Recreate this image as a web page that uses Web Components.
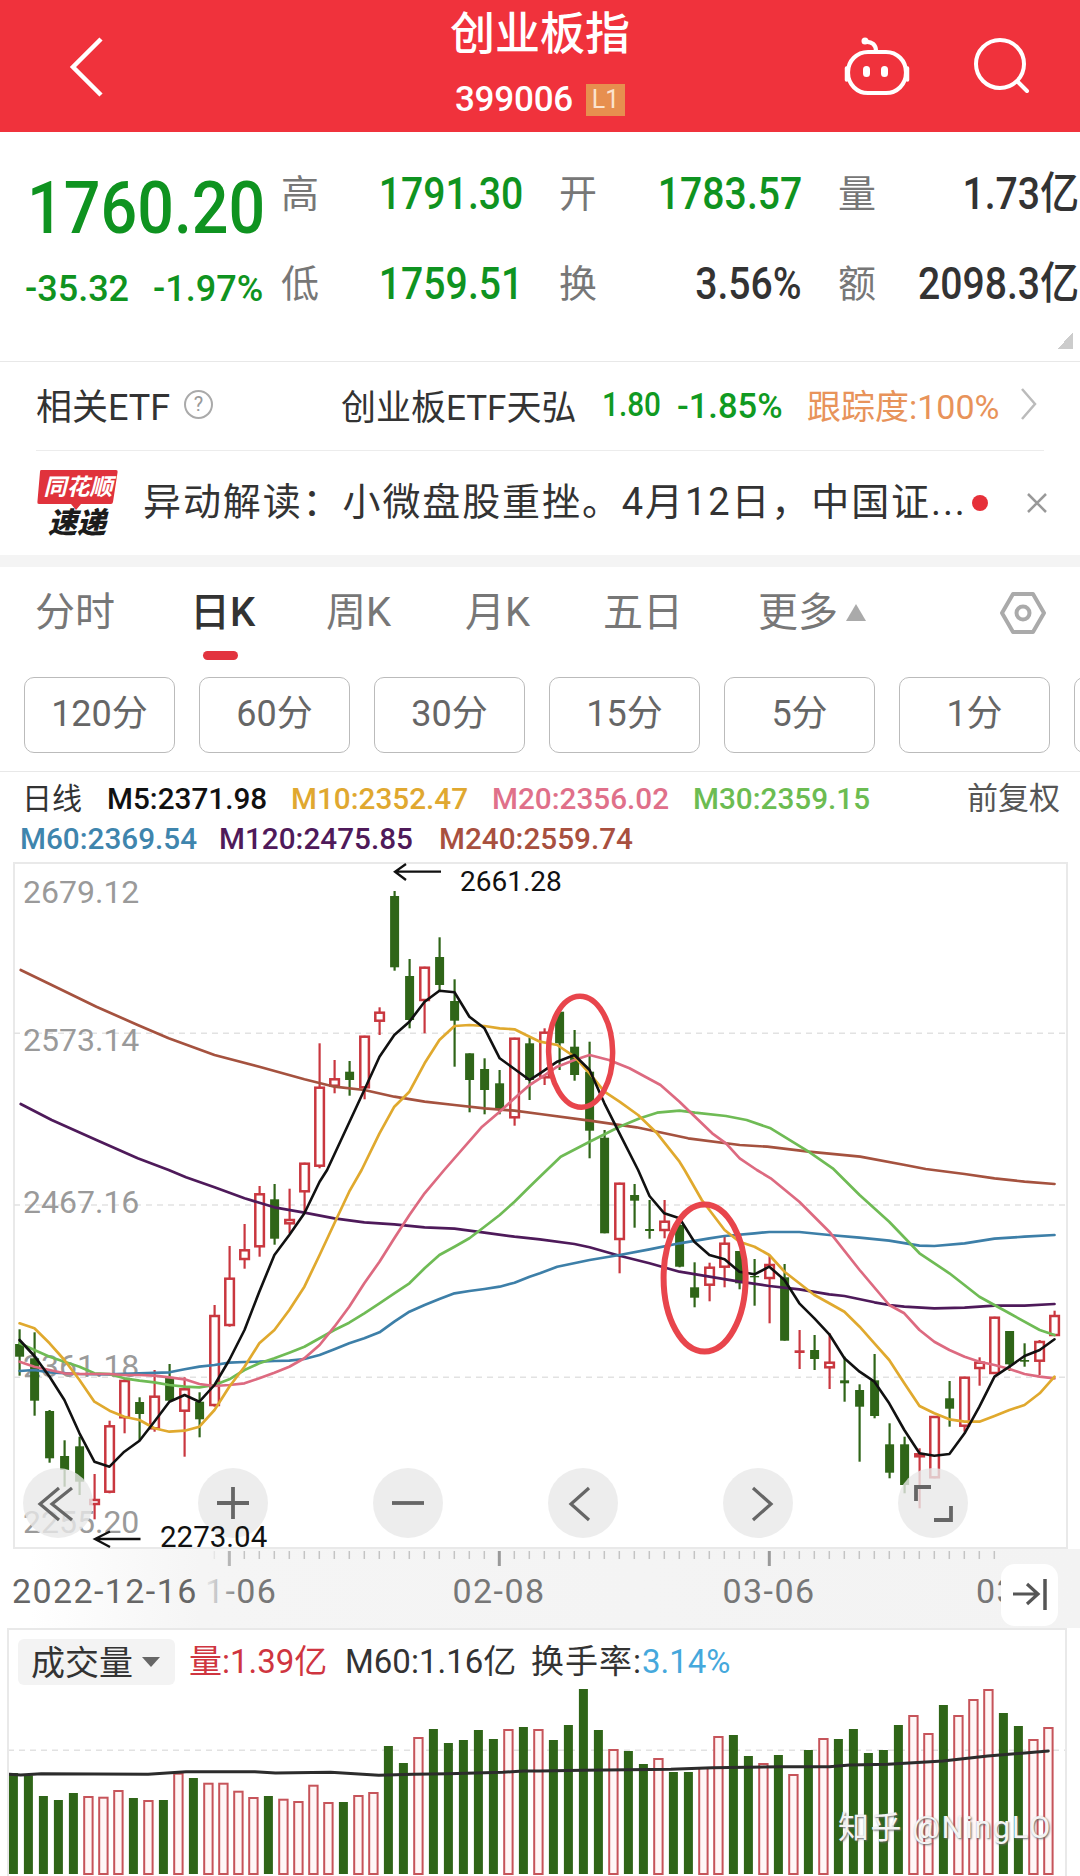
<!DOCTYPE html>
<html lang="zh">
<head>
<meta charset="utf-8">
<title>创业板指</title>
<style>
html,body{margin:0;padding:0;background:#fff}
body{width:1080px;height:1876px;overflow:hidden;font-family:Roboto,"Noto Sans CJK SC",sans-serif;color:#333}
</style>
</head>
<body>
<stock-app>
  <top-bar title="创业板指" code="399006"></top-bar>
  <quote-panel></quote-panel>
  <etf-row></etf-row>
  <news-row></news-row>
  <period-tabs></period-tabs>
  <period-chips></period-chips>
  <ma-legend></ma-legend>
  <kline-chart></kline-chart>
  <time-axis></time-axis>
  <volume-panel></volume-panel>
</stock-app>
<script>
const def=(name,render)=>customElements.define(name,class extends HTMLElement{
  connectedCallback(){ if(this.shadowRoot) return; this.attachShadow({mode:'open'}).innerHTML=render(this); }
});

def('stock-app',()=>`<style>:host{display:block;width:1080px;height:1876px;overflow:hidden}</style><slot></slot>`);

def('top-bar',el=>`<style>
:host{display:grid;grid-template-columns:1fr auto 1fr;align-items:center;height:132px;background:#f0323c;color:#fff}
.l{padding-left:70px;display:flex}
.c{display:flex;flex-direction:column;align-items:center;align-self:start}
.t{font-size:45px;line-height:70px;font-weight:500;height:80px}
.s{display:flex;align-items:center;height:40px;gap:13px}
.code{font-size:35px;line-height:40px;letter-spacing:-.2px;font-weight:500}
.b{width:39px;height:32px;background:#e78f4f;color:#fbe3cf;font-size:25px;line-height:32px;text-align:center}
.r{display:flex;justify-content:flex-end;padding-right:52px;gap:65px;align-items:center}
svg{display:block;overflow:visible}
</style>
<div class="l"><svg width="34" height="60" fill="none" stroke="#fff" stroke-width="4.5"><path d="M31 3 3 31l28 28"/></svg></div>
<div class="c"><div class="t">${el.getAttribute('title')}</div><div class="s"><span class="code">${el.getAttribute('code')}</span><span class="b">L1</span></div></div>
<div class="r">
<svg width="64" height="58" fill="none" stroke="#fff" stroke-width="4.2" stroke-linecap="round"><rect x="3" y="15" width="58" height="41" rx="20"/><path d="M1.5 31v12M62.5 31v12" stroke-width="3.500"/><circle cx="20" cy="4" r="3.5" fill="#fff" stroke="none"/><path d="M20 5c7-1 11 3 11 9"/><rect x="19" y="30" width="5" height="9" rx="2.5" fill="#fff" stroke-width="2"/><rect x="37" y="30" width="5" height="9" rx="2.5" fill="#fff" stroke-width="2"/></svg>
<svg width="54" height="54" fill="none" stroke="#fff" stroke-width="4" stroke-linecap="round"><circle cx="26" cy="25" r="24"/><path d="M44 43l9 9"/></svg>
</div>`);

def('quote-panel',()=>{
const G='#0f9320',D='#333',L='#777';
const lab=(c,r,t)=>`<span class="lab" style="grid-column:${c};grid-row:${r}">${t}</span>`;
const val=(c,r,t,col)=>`<span class="val" style="grid-column:${c};grid-row:${r};color:${col}">${t}</span>`;
return `<style>
:host{display:grid;box-sizing:border-box;height:230px;padding:17px 0 0 26px;grid-template-columns:255px 40px 202px 36px 40px 203px 36px 40px 201px;grid-template-rows:90px 90px 32px;border-bottom:1.5px solid #e8e8e8;align-items:center}
.lab{font-size:38px;line-height:50px;color:${L}}
.val{font-size:44px;line-height:50px;justify-self:end;display:inline-block;transform:scaleX(.89);transform-origin:right center;white-space:nowrap;font-weight:500}
.big{grid-column:1;grid-row:1;align-self:end;font-size:73px;line-height:62px;font-weight:500;color:${G};display:inline-block;transform:scaleX(.885);transform-origin:left center;margin-left:1px;white-space:nowrap}
.sub{grid-column:1;grid-row:2;padding-top:10px;margin-left:-1px;font-size:36px;line-height:44px;color:${G};display:flex;gap:24px;white-space:nowrap;font-weight:500}
.tri{grid-column:1/-1;grid-row:3;justify-self:end;margin-right:6px;align-self:start;margin-top:4px;width:16px;height:16px;background:linear-gradient(135deg,transparent 50%,#ccc 50%)}
</style>
<span class="big">1760.20</span>
<span class="sub"><span>-35.32</span><span>-1.97%</span></span>
${lab(2,1,'高')}${val(3,1,'1791.30',G)}${lab(5,1,'开')}${val(6,1,'1783.57',G)}${lab(8,1,'量')}${val(9,1,'1.73亿',D)}
${lab(2,2,'低')}${val(3,2,'1759.51',G)}${lab(5,2,'换')}${val(6,2,'3.56%',D)}${lab(8,2,'额')}${val(9,2,'2098.3亿',D)}
<span class="tri"></span>`});

def('etf-row',()=>`<style>
:host{display:flex;align-items:center;box-sizing:border-box;height:89px;padding-bottom:4px;margin:0 36px 0 36px;border-bottom:1.5px solid #ececec;white-space:nowrap}
.a{font-size:36px;width:148px}
.q{width:29px;height:29px;box-sizing:border-box;border:2px solid #aaa;border-radius:50%;color:#999;font-size:20px;line-height:25px;text-align:center}
.b{font-size:35px;margin-left:128px;width:261px}
.n{font-size:33px;color:#109a22;display:inline-block;transform-origin:left center;font-weight:500}
.n1{width:75px;transform:scaleX(.9)}.n2{width:130px;font-size:34.500px;padding-top:3px}
.o{font-size:34px;color:#e8935a;width:214px}
svg{display:block}
</style>
<span class="a">相关ETF</span><span class="q">?</span>
<span class="b">创业板ETF天弘</span>
<span class="n n1">1.80</span><span class="n n2">-1.85%</span>
<span class="o">跟踪度:100%</span>
<svg width="16" height="32" fill="none" stroke="#bbb" stroke-width="2.5"><path d="M1 1l13 15L1 31"/></svg>`);

def('news-row',()=>`<style>
:host{display:flex;align-items:center;box-sizing:border-box;height:104px;padding-left:37px;white-space:nowrap}
svg{display:block;flex:none}
.logo{margin-top:8px}
.t{font-size:38px;letter-spacing:1.9px;margin-left:24px;width:829px;color:#333;overflow:hidden;padding-bottom:10px}
.d{width:16px;height:16px;border-radius:50%;background:#e63039;flex:none}
.x{margin-left:38px}
</style>
<svg class="logo" width="82" height="76" viewBox="0 0 82 76"><path d="M4 1h75q2 0 1.600 2L76 33q-.4 2-2 2H44l-5 6-5-6H2q-2 0-1.600-2L3 3q0-2 1-2z" fill="#e0323c"/><text x="41" y="26" font-size="23" font-weight="700" font-style="italic" fill="#fff" text-anchor="middle" font-family="Noto Sans CJK SC,sans-serif">同花顺</text><text x="40" y="64" font-size="29" font-weight="900" font-style="italic" fill="#1c1c1c" text-anchor="middle" font-family="Noto Sans CJK SC,sans-serif">速递</text></svg>
<span class="t">异动解读：小微盘股重挫。4月12日，中国证...</span>
<span class="d"></span>
<svg class="x" width="22" height="22" fill="none" stroke="#999" stroke-width="2.500"><path d="M2 2l18 18M20 2 2 20"/></svg>`);

def('period-tabs',()=>`<style>
:host{display:block;box-sizing:border-box;height:122px;border-top:12px solid #f4f4f4;position:relative}
.row{display:grid;grid-template-columns:155px 136px 139px 138px 155px auto 1fr;height:84px;padding-left:35px;align-items:center;font-size:40px;color:#777}
.on{color:#333;font-weight:500}
.tri{display:inline-block;width:0;height:0;border:10px solid transparent;border-top:0;border-bottom:17px solid #aaa;margin-left:8px;vertical-align:5px}
.hex{justify-self:end;margin:8px 34px 0 0;display:block}
.bar{position:absolute;left:203px;top:84px;width:35px;height:9px;border-radius:5px;background:#e2343f}
</style>
<div class="row"><span>分时</span><span class="on">日K</span><span>周K</span><span>月K</span><span>五日</span><span>更多<i class="tri"></i></span>
<svg class="hex" width="46" height="44" fill="none" stroke="#aaa" stroke-width="4"><path d="M13 3h20l11 19-11 19H13L2 22z" stroke-linejoin="round"/><circle cx="23" cy="22" r="6.500"/></svg></div>
<div class="bar"></div>`);

def('period-chips',()=>`<style>
:host{display:flex;gap:24px;box-sizing:border-box;height:95px;padding:0 0 0 24px;overflow:hidden;border-bottom:1.5px solid #e8e8e8;align-items:flex-start}
span{flex:none;box-sizing:border-box;width:151px;height:76px;border:1.5px solid #bbb;border-radius:10px;text-align:center;font-size:36px;line-height:72px;color:#666}
</style>${['120分','60分','30分','15分','5分','1分',''].map(t=>`<span>${t}</span>`).join('')}`);

def('ma-legend',()=>{
const it=(t,c,w)=>`<span style="color:${c};width:${w}px;font-weight:500">${t}</span>`;
return `<style>
:host{display:block;box-sizing:border-box;height:90px;font-size:29.700px;white-space:nowrap}
.r{display:flex;height:39px;align-items:center;line-height:39px}
.r1{padding:7px 0 0 22px}
.r2{padding:0 0 0 20px;margin-top:1px}
.rt{margin-left:auto;margin-right:20px;font-size:31px;color:#555}
.z{color:#333;width:85px;font-size:30px}
</style>
<div class="r r1"><span class="z">日线</span>${it('M5:2371.98','#111',184)}${it('M10:2352.47','#e0a830',201)}${it('M20:2356.02','#e0708a',201)}${it('M30:2359.15','#6cbc52',176)}<span class="rt">前复权</span></div>
<div class="r r2">${it('M60:2369.54','#3f85ad',199)}${it('M120:2475.85','#4f1a5a',220)}${it('M240:2559.74','#a8503f',200)}</div>`});

/* ---------- chart data ---------- */
const Y=(b,v)=>+(b+v/3).toFixed(1);
const G5=[
['D',478,522,560,617],['D',487,565,692,737],['D',720,723,865,878],['D',811,858,900,950],['D',800,829,935,975],
['U',912,987,1005,1048],['U',752,766,968,970],['U',625,630,745,790],['D',682,696,732,810],['U',600,677,778,785],
['D',582,623,692,692],['U',622,655,725,860],['D',667,695,748,802],['U',405,435,708,710],['U',228,323,468,470],
['U',162,238,270,296],['U',48,70,232,260],['D',42,88,206,224],['U',56,147,163,190],['U',-22,-22,67,130]];
const G3=[
['U',820,950,1190,1195],['U',870,925,950,970],['D',873,905,930,977],['U',797,797,955,988],['U',712,725,755,795],
['D',363,378,592,602],['D',567,618,750,775],['U',590,590,693,790],['D',502,561,645,660],['D',628,693,752,890],
['D',850,850,930,1027],['D',865,897,960,1033],['D',900,940,1020,1033],['U',803,803,1045,1067],['D',803,820,930,990],
['U',775,785,925,945],['D',725,725,820,900],['D',780,830,915,932],['D',815,905,1082,1165],['D',1080,1103,1390,1390]];
const G6=[
['U',38,38,210,310],['D',42,75,92,173],['D',90,177,183,206],['U',90,152,183,205],['D',145,165,290,292],
['D',277,352,383,412],['U',278,290,347,394],['U',195,218,293,352],['D',243,243,340,358],['D',267,318,322,407],
['U',258,282,327,460],['D',282,322,512,512],['S',480,541,549,597],['D',495,540,567,600],['U',490,575,595,657],
['D',560,631,640,695],['D',643,660,710,875],['D',552,631,738,745],['D',760,823,908,925],['D',800,823,945,970],
['U',835,850,860,1015],['U',738,738,925,925],['D',633,685,716,770],['U',620,620,770,785],['U',562,575,597,647],
['U',440,440,612,612],['D',483,483,583,603],['D',520,570,575,590],['U',510,513,575,615],['U',422,435,498,498]];
const CANDLES=[...G5.map(c=>[c[0],...c.slice(1).map(v=>Y(1170,v))]),...G3.map(c=>[c[0],...c.slice(1).map(v=>Y(770,v))]),...G6.map(c=>[c[0],...c.slice(1).map(v=>Y(1170,v))])];

const pts=(ox,b,a)=>a.map(([x,y])=>`${(ox+x/2.904).toFixed(1)},${Y(b,y)}`).join(' ');
const LINES=[
['#a5523f',2.7,pts(0,770,[[60,600],[150,645],[280,710],[400,765],[490,805],[623,855],[753,890],[884,928],[971,950],[1058,960],[1145,980],[1233,995],[1320,1005],[1407,1015],[1494,1022],[1568,1032]])+' '+pts(540,770,[[144,1052],[280,1072],[430,1105],[580,1125],[660,1130],[780,1145],[930,1160],[1060,1185],[1120,1197]])+' '+pts(540,1170,[[1233,12],[1320,25],[1407,35],[1494,42]])],
['#4e1a5a',2.7,pts(0,770,[[60,1002],[150,1050],[280,1110],[400,1165],[490,1200]])+' '+pts(0,1170,[[540,22],[623,52],[710,85],[797,112],[884,128],[971,145],[1058,157],[1145,163],[1233,172],[1320,176],[1407,188],[1494,200],[1568,208]])+' '+pts(540,1170,[[100,222],[144,232],[231,257],[318,280],[405,305],[492,320],[579,335],[666,348],[753,358],[840,373],[884,378],[971,397],[1014,405],[1058,410],[1145,415],[1233,413],[1320,407],[1407,407],[1494,402]])],
['#3d7fa8',2.7,pts(0,1170,[[57,603],[100,600],[144,607],[231,612],[318,613],[405,610],[492,607],[536,598],[579,590],[623,585],[666,578],[710,576],[753,575],[797,573],[840,572],[884,567],[928,555],[971,538],[1014,520],[1058,505],[1102,487],[1145,455],[1189,425],[1233,405],[1276,387],[1320,370],[1363,363],[1407,357],[1451,350],[1494,338],[1538,320],[1568,310]])+' '+pts(540,1170,[[50,290],[144,270],[231,255],[318,238],[405,220],[492,205],[536,198],[623,190],[666,186],[753,186],[840,195],[928,203],[1014,212],[1102,227],[1145,228],[1233,220],[1320,206],[1407,200],[1494,195]])],
['#6fbb55',2.7,pts(0,1170,[[57,520],[100,540],[144,560],[187,575],[231,590],[274,610],[318,612],[361,625],[405,632],[448,637],[492,645],[536,650],[579,652],[623,645],[666,628],[710,600],[753,580],[797,565],[840,548],[884,530],[928,505],[971,480],[1014,458],[1058,430],[1102,400],[1145,370],[1189,340],[1233,295],[1276,255],[1320,230],[1363,205],[1407,170],[1451,135],[1494,95],[1538,50],[1568,20]])+' '+pts(540,770,[[60,1160],[144,1115],[231,1070],[290,1045],[340,1028],[405,1022],[450,1028],[540,1038],[600,1050],[670,1075],[780,1145],[850,1195]])+' '+pts(540,1170,[[928,75],[1014,155],[1102,250],[1189,310],[1276,380],[1363,430],[1451,480],[1494,495]])],
['#dd6a80',2.7,pts(0,1170,[[57,575],[100,590],[144,600],[187,610],[231,612],[318,612],[361,615],[405,615],[448,617],[492,622],[536,628],[579,642],[623,648],[666,645],[710,640],[753,625],[797,608],[840,590],[884,565],[928,525],[971,470],[1014,410],[1058,340],[1102,275],[1145,205],[1189,135],[1233,70],[1290,0]])+' '+pts(0,770,[[1400,1070],[1451,1025],[1494,985],[1538,945]])+' '+pts(540,770,[[0,925],[50,890],[100,870],[144,855],[200,870],[260,895],[350,945],[405,995],[450,1040],[500,1090],[540,1120],[580,1165],[630,1200]])+' '+pts(540,1170,[[670,25],[753,95],[840,185],[928,300],[1014,405],[1058,430],[1102,480],[1145,515],[1189,540],[1233,560],[1276,575],[1320,585],[1363,597],[1407,612],[1451,620],[1494,625]])],
['#e0a92e',2.7,pts(0,1170,[[57,460],[100,475],[144,520],[187,570],[231,630],[274,695],[318,722],[361,740],[405,750],[448,775],[492,785],[536,782],[579,770],[623,720],[666,650],[710,590],[753,520],[797,480],[840,420],[884,350],[928,255],[971,160],[1014,65],[1050,0]])+' '+pts(0,770,[[1102,1090],[1145,1010],[1189,965],[1233,880],[1276,810],[1320,768],[1363,765],[1407,768],[1451,775],[1494,778],[1538,800]])+' '+pts(540,770,[[0,815],[50,825],[100,860],[144,910],[187,965],[231,995],[285,1035],[340,1090],[405,1175],[420,1200]])+' '+pts(540,1170,[[470,90],[536,180],[579,215],[623,230],[666,255],[710,305],[753,340],[797,375],[840,400],[884,425],[928,470],[971,520],[1014,570],[1058,640],[1102,708],[1145,730],[1189,748],[1233,755],[1276,755],[1320,738],[1363,720],[1407,705],[1451,670],[1494,620]])],
['#111',2.6,pts(0,1170,[[57,510],[100,558],[144,620],[187,690],[231,790],[274,875],[318,890],[361,845],[405,812],[448,755],[492,695],[536,675],[579,695],[623,645],[666,570],[710,480],[753,365],[797,255],[840,195],[884,130],[928,35],[950,0]])+' '+pts(0,770,[[1058,960],[1102,860],[1145,795],[1189,755],[1233,695],[1276,662],[1320,667],[1363,740],[1407,775],[1451,865],[1494,897],[1538,930]])+' '+pts(540,770,[[0,910],[50,875],[100,855],[144,900],[187,1000],[231,1090],[285,1200]])+' '+pts(540,1170,[[318,78],[361,130],[405,145],[448,215],[492,255],[536,268],[579,305],[623,313],[666,290],[710,330],[753,400],[797,445],[840,493],[884,565],[928,605],[971,635],[1014,700],[1058,780],[1102,850],[1145,857],[1189,852],[1233,790],[1276,710],[1320,620],[1363,590],[1407,558],[1451,540],[1494,508]])]
];

def('chart-btn',el=>{
const ic={
back:'<path d="M36 20 17 36l19 16M49 20 29 36l20 16"/>',
plus:'<path d="M19 35h32M35 19v32" stroke-width="3.800"/>',
minus:'<path d="M19 35h32" stroke-width="3.800"/>',
prev:'<path d="M41 20 23 36l18 16"/>',
next:'<path d="M30 20l18 16-18 16"/>',
full:'<path d="M18 33V19h15M53 38v14H36" stroke-width="3.800"/>'};
return `<style>:host{display:block;width:70px;height:70px;border-radius:50%;background:rgba(232,232,232,.8)}svg{display:block}</style>
<svg width="70" height="70" fill="none" stroke="#666" stroke-width="3.200">${ic[el.getAttribute('icon')]}</svg>`});

def('kline-chart',()=>{
const R='#c9373f',GR='#2f6518';
let c='';
CANDLES.forEach(([t,wt,bt,bb,wb],i)=>{
 const x=+(19.6+15*i).toFixed(1);
 const col=t==='D'?GR:R;
 c+=`<path d="M${x} ${wt}V${wb}" stroke="${col}" stroke-width="2.200"/>`;
 if(t==='D') c+=`<rect x="${x-4.5}" y="${bt}" width="9" height="${(bb-bt).toFixed(1)}" fill="${col}"/>`;
 else if(t==='S') c+=`<rect x="${x-5}" y="${bt}" width="10" height="${(bb-bt).toFixed(1)}" fill="${col}"/>`;
 else c+=`<rect x="${x-4.3}" y="${bt+1}" width="8.600" height="${Math.max(bb-bt-2,2).toFixed(1)}" fill="#fff" stroke="${col}" stroke-width="2.500"/>`;
});
const lines=LINES.map(([col,w,p])=>`<polyline points="${p}" fill="none" stroke="${col}" stroke-width="${w}" stroke-linejoin="round" stroke-linecap="round"/>`).join('');
const label=(t,y)=>`<text x="23" y="${y}" font-size="32" fill="#9a9a9a">${t}</text>`;
const grid=[1033.3,1205,1377.3].map(y=>`<path d="M14 ${y}H1066" stroke="#e2e2e2" stroke-width="1.500" stroke-dasharray="6 5"/>`).join('');
return `<style>
:host{display:block;position:relative;height:687px;width:1080px}
svg.m{display:block}
.btns{position:absolute;left:23px;top:606px;display:flex;gap:105px}
.o{position:absolute;left:0;top:0;pointer-events:none;display:block}
</style>
<svg class="m" width="1080" height="687" viewBox="0 862 1080 687" font-family="Roboto,sans-serif">
<rect x="14" y="863" width="1053" height="685" fill="#fff" stroke="#e9e9e9" stroke-width="2"/>
${grid}
${label('2679.12',902.7)}${label('2573.14',1051)}${label('2467.16',1213)}${label('2361.18',1377)}${label('2255.20',1533)}
${c}${lines}
<g fill="none" stroke="#111" stroke-width="2.300"><path d="M441 871.700H395M406 864 395 871.700 406 880"/><path d="M140.500 1539H95M110 1531.500 95 1539 110 1547"/></g>
<text x="460" y="890.500" font-size="28" fill="#111">2661.28</text>
<g fill="none" stroke="#e8454c"><ellipse cx="580.600" cy="1051.700" rx="32" ry="55.500" stroke-width="5.500" transform="rotate(-1 580 1051)"/><ellipse cx="704.600" cy="1278" rx="41" ry="73.500" stroke-width="6"/></g>
</svg>
<div class="btns"><chart-btn icon="back"></chart-btn><chart-btn icon="plus"></chart-btn><chart-btn icon="minus"></chart-btn><chart-btn icon="prev"></chart-btn><chart-btn icon="next"></chart-btn><chart-btn icon="full"></chart-btn></div>
<svg class="o" width="1080" height="705" viewBox="0 862 1080 705" font-family="Roboto,sans-serif"><text x="160" y="1546.500" font-size="29.500" fill="#111">2273.04</text></svg>`});

def('time-axis',()=>{
let t='';
for(let k=-1;k<=51;k++){const x=229.3+15*k,maj=k%18===0;
 t+=`<path d="M${x.toFixed(1)} 2V${maj?17:10}" stroke="${maj?'#999':'#c4c4c4'}" stroke-width="${maj?3:1.5}"/>`;}
const lb=(x,s,a='middle',f='#777')=>`<text x="${x}" y="53.500" font-size="34" letter-spacing="1.400" fill="${f}" text-anchor="${a}">${s}</text>`;
return `<style>
:host{display:block;position:relative;height:79px;width:1080px;background:linear-gradient(90deg,#fff 30px,#f5f5f5 200px,#f3f3f3 100%)}
svg{display:block}
.end{position:absolute;left:1001px;top:15px;width:57px;height:62px;background:#fff;border-radius:14px}
</style>
<svg width="1080" height="79" font-family="Roboto,sans-serif">
<defs><linearGradient id="f"><stop offset="0" stop-color="#f5f5f5" stop-opacity=".93"/><stop offset="1" stop-color="#f5f5f5" stop-opacity="0"/></linearGradient></defs>
${t}
${lb(205,'1-06','start')}${lb(499,'02-08')}${lb(769,'03-06')}${lb(976,'03','start')}
<rect x="205" y="0" width="36" height="79" fill="url(#f)"/>
${lb(12,'2022-12-16','start','#666')}
</svg>
<div class="end"><svg width="57" height="62" fill="none" stroke="#555" stroke-width="3.200"><path d="M12 30h25M26 20l11 10-11 10"/><path d="M44 15v31" stroke-width="3.500"/></svg></div>`});

def('volume-panel',()=>{
const Z7=[['D',636],['D',643],['D',705],['D',717],['D',696],['U',705],['U',707],['U',687],['D',711],['U',717],['D',717],['U',635],['D',651],['U',665],['U',665],['U',689],['U',708],['D',705],['U',713],['U',720],['U',671],['U',723],['D',723],['U',702],['U',693],['D',555],['D',606],['U',528],['D',504],['D',546],['D',537],['D',507],['D',534],['U',504],['D',498],['U',504],
['D',537],['D',492],['D',384],['D',507],['U',564],['D',570],['D',609],['U',591],['D',633],['D',633],['U',618],['U',525],['D',522],['D',585],['U',606],['D',582],['U',639],['D',567],['U',531],['D',534],['D',504],['D',576],['D',567],['D',492],['U',462],['U',516],['D',432],['U',462],['U',414],['U',384],['D',456],['D',495],['U',534],['U',498]];
const top0=1684,bot=1873;
let b='';
Z7.forEach(([t,z],i)=>{
 const x=13.4+15*i,y=1560+z/3-top0;
 b+= t==='D'?`<rect x="${(x-4.5).toFixed(1)}" y="${y.toFixed(1)}" width="9" height="${(bot-top0-y).toFixed(1)}" fill="#2f6518"/>`
  :`<rect x="${(x-4.2).toFixed(1)}" y="${(y+1).toFixed(1)}" width="8.400" height="${(bot-top0-y-1).toFixed(1)}" fill="#fff6f6" stroke="#c6545a" stroke-width="2"/>`;
});
const ln=[[27,640],[60,642],[120,638],[430,640],[540,632],[740,632],[800,636],[960,634],[1100,643],[1200,640],[1300,638],[1460,634],[1520,630]].map(([x,y])=>[x/2.904,y]).concat([[0,630],[125,628],[380,625],[500,620],[700,617],[840,617],[900,612],[1010,610],[1170,600],[1300,585],[1476,570]].map(([x,y])=>[540+x/2.904,y]));
const lp=ln.map(([x,y])=>`${x.toFixed(1)},${(1560+y/3-top0).toFixed(1)}`).join(' ');
return `<style>
:host{display:block;position:relative;height:249px;width:1080px}
.h{display:flex;align-items:center;box-sizing:border-box;height:57px;padding:11px 0 0 18px;font-size:33px;white-space:nowrap}
.chip{display:flex;align-items:center;box-sizing:border-box;width:157px;height:46px;padding:0 0 4px 13px;background:#f3f3f3;border-radius:6px;color:#333;font-size:34px}
.chip i{width:0;height:0;border:9px solid transparent;border-bottom:0;border-top:10px solid #666;margin:4px 0 0 9px}
.v{color:#cf3540;margin-left:14px;width:156px;padding-bottom:6px}
.m{color:#333;width:186px;padding-bottom:6px}
.s{color:#333;padding-bottom:6px}.s span{letter-spacing:1px}.s b{font-weight:400;color:#45a8dc;font-size:33px}
.frame{position:absolute;left:7px;top:0;width:1060px;height:249px;box-sizing:border-box;border:2px solid #e9e9e9;border-bottom:0;pointer-events:none}
svg{display:block}
.wm{position:absolute;left:838px;top:174px;font-size:31px;letter-spacing:1.500px;color:#f4f4f4;text-shadow:1px 1px 2px #666;white-space:nowrap}
</style>
<div class="frame"></div>
<div class="h"><span class="chip">成交量<i></i></span><span class="v">量:1.39亿</span><span class="m">M60:1.16亿</span><span class="s"><span>换手率:</span><b>3.14%</b></span></div>
<svg width="1080" height="192" viewBox="0 0 1080 192">
<path d="M8 65.300H1066" stroke="#e2e2e2" stroke-width="1.500" stroke-dasharray="6 5"/>
${b}
<polyline points="${lp}" fill="none" stroke="#2c2c2c" stroke-width="3" stroke-linejoin="round" stroke-linecap="round"/>
</svg>
<span class="wm">知乎 @NingLO</span>`});
</script>
</body>
</html>
